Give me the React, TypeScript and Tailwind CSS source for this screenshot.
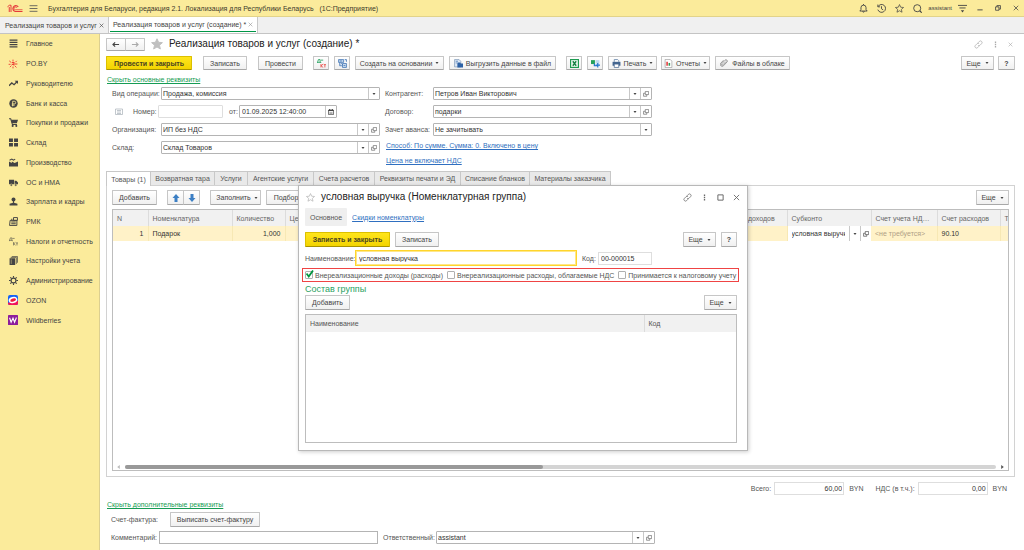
import React, { ReactNode, useState } from "react";

/* ---------- icons ---------- */

function Svg({ className = "w-[9px] h-[9px]", children }: { className?: string; children: ReactNode }) {
  return (
    <svg viewBox="0 0 16 16" className={"shrink-0 " + className} fill="none" stroke="currentColor" strokeWidth="1.6" aria-hidden="true">
      {children}
    </svg>
  );
}

const LinesIcon = () => (
  <Svg>
    <path d="M1 2h14M1 6h14M1 10h14M1 14h14" strokeWidth="2.2" />
  </Svg>
);
const BurstIcon = () => (
  <Svg className="w-[10px] h-[10px] text-[#ee4036]">
    <path d="M8 1v3M8 12v3M2 3l3 2.500M1 8.500h3M3 13l2.500-2.500M12 5l2-2M13.500 13.500L11 11" strokeWidth="1.500" />
    <path d="M6 5.500h3.500v5M11 8h4M6 8.500h4" strokeWidth="1.800" />
  </Svg>
);
const TrendIcon = () => (
  <Svg>
    <path d="M0 12l5-5 4 3 6-6" strokeWidth="2.2" />
    <path d="M10 3h6v6z" fill="currentColor" stroke="none" />
  </Svg>
);
const CoinIcon = () => (
  <Svg>
    <circle cx="8" cy="8" r="7.5" fill="currentColor" stroke="none" />
    <path d="M6.500 13V4h3a2.300 2.300 0 010 4.800H5M5 11h5" stroke="#fbeb9b" strokeWidth="1.500" />
  </Svg>
);
const CartIcon = () => (
  <Svg>
    <path d="M0 1.500h3l3 10h8" strokeWidth="1.800" />
    <path d="M3.500 3H16l-2 6.500H5.500z" fill="currentColor" stroke="none" />
    <circle cx="6.500" cy="14" r="1.800" fill="currentColor" stroke="none" />
    <circle cx="13" cy="14" r="1.800" fill="currentColor" stroke="none" />
  </Svg>
);
const BoxesIcon = () => (
  <Svg>
    <path d="M0 1h7v6H0zM9 1h7v6H9zM0 9h7v6H0zM9 9h7v6H9z" fill="currentColor" stroke="none" />
  </Svg>
);
const FactoryIcon = () => (
  <Svg>
    <path d="M0 15V6l5 3V6l5 3 6-3v9z" fill="currentColor" stroke="none" />
    <path d="M1 4l4-2 3 2 3-2" strokeWidth="1.800" />
  </Svg>
);
const TruckIcon = () => (
  <Svg>
    <path d="M0 3h9v8H0zM10 5h3l3 3v3h-6z" fill="currentColor" stroke="none" />
    <circle cx="4" cy="12.500" r="2" fill="currentColor" stroke="#fbeb9b" strokeWidth=".8" />
    <circle cx="12" cy="12.500" r="2" fill="currentColor" stroke="#fbeb9b" strokeWidth=".8" />
  </Svg>
);
const PersonIcon = () => (
  <Svg>
    <circle cx="8" cy="4.500" r="3.500" fill="currentColor" stroke="none" />
    <path d="M7 7h2v3l6 2v3H1v-3l6-2z" fill="currentColor" stroke="none" />
  </Svg>
);
const RegisterIcon = () => (
  <Svg>
    <path d="M2 6h12v9H1zM8 1h7v5H8z" strokeWidth="1.700" />
    <path d="M4 9h8M4 12h8M5 3v3" strokeWidth="1.800" />
  </Svg>
);
const DtKtIcon = () => (
  <Svg>
    <path d="M1 6l1.500-4.500H5V6M0 7.500V6h6v1.500M6 2.500h4" strokeWidth="1" />
    <path d="M8 9v6M11.500 9.500l-3 2.500 3 2.500M12.500 10.500H16M14.200 10.500V15" strokeWidth="1" />
  </Svg>
);
const BooksIcon = () => (
  <Svg>
    <path d="M1 4h10v12H1z" fill="currentColor" stroke="none" />
    <path d="M3 2.500h10V14M5 .8h10V12" strokeWidth="1.300" />
    <path d="M4 6v8" stroke="#fbeb9b" strokeWidth=".8" />
  </Svg>
);
const GearIcon = () => (
  <Svg>
    <circle cx="8" cy="8" r="4.300" strokeWidth="2" />
    <path d="M8 0v3M8 13v3M0 8h3M13 8h3M2.300 2.300l2 2M11.700 11.700l2 2M2.300 13.700l2-2M11.700 4.300l2-2" strokeWidth="2" />
  </Svg>
);
const OzonIcon = () => (
  <Svg className="w-[10px] h-[10px]">
    <rect width="16" height="16" rx="3" fill="#1663f5" stroke="none" />
    <path d="M0 12.500L16 9v4a3 3 0 01-3 3H3a3 3 0 01-3-3z" fill="#f0145a" stroke="none" />
    <ellipse cx="8" cy="8" rx="7" ry="5" fill="#fff" stroke="none" transform="rotate(-16 8 8)" />
    <ellipse cx="8.200" cy="8.200" rx="4.700" ry="2.500" fill="#f01a3c" stroke="none" transform="rotate(-16 8 8)" />
  </Svg>
);
const WbIcon = () => (
  <Svg className="w-[10px] h-[10px]">
    <rect width="16" height="16" rx="1" fill="#8c1d9c" stroke="none" />
    <path d="M2.500 4.500l2.500 7 3-6.500 2.500 6.500 3-7.500" stroke="#fff" strokeWidth="1.800" />
  </Svg>
);
const StarIcon = ({ className, filled }: { className: string; filled?: boolean }) => (
  <Svg className={className}>
    <path d="M8 1l2.100 4.700 5.100.5-3.900 3.400 1.200 5L8 12l-4.500 2.600 1.200-5L.8 6.200l5.100-.5z" fill={filled ? "currentColor" : "none"} strokeWidth="1.300" />
  </Svg>
);
const LinkIcon = ({ className }: { className: string }) => (
  <Svg className={className}>
    <path d="M7 5l2.500-2.500a2.800 2.800 0 014 4L10.500 9.500a2.500 2.500 0 01-3.500 0M9 11l-2.500 2.500a2.800 2.800 0 01-4-4L5.500 6.500a2.500 2.500 0 013.500 0" strokeWidth="1.300" />
  </Svg>
);
const CrossIcon = ({ className }: { className: string }) => (
  <Svg className={className}>
    <path d="M2 2l12 12M14 2L2 14" strokeWidth="2" />
  </Svg>
);
const DotsIcon = ({ className }: { className: string }) => (
  <Svg className={className}>
    <path d="M8 1v3.500M8 6.300v3.500M8 11.500V15" strokeWidth="3" />
  </Svg>
);
const OpenIcon = () => (
  <Svg className="w-[6px] h-[6px]">
    <path d="M6 1.500h9v8H6z" />
    <path d="M6 6H1.500v8H10v-4" />
  </Svg>
);
const Caret = () => (
  <svg viewBox="0 0 6 4" className="h-[2px] w-[4px] shrink-0" aria-hidden="true">
    <path d="M0 0h6L3 4z" fill="#444" />
  </svg>
);
const ArrowIcon = ({ className, rotate }: { className: string; rotate: number }) => (
  <Svg className={className}>
    <path d="M1 8h14M6 3L1 8l5 5" strokeWidth="2.600" transform={`rotate(${rotate} 8 8)`} />
  </Svg>
);
const BlockArrow = ({ down }: { down?: boolean }) => (
  <Svg className="h-[8px] w-[8px]">
    <path d="M8 0l7 8h-4v8H5V8H1z" fill="#3c7fc4" stroke="none" transform={down ? "rotate(180 8 8)" : undefined} />
  </Svg>
);

/* ---------- controls ---------- */

const buttonBase =
  "flex shrink-0 items-center justify-center whitespace-nowrap rounded-[1px] border border-[#c6c6c6] border-b-[#a8a8a8] bg-linear-to-b from-white to-[#f0f0f0] text-[#444]";

function Btn({ className = "", label, children }: { className?: string; label?: string; children: ReactNode }) {
  return (
    <button type="button" aria-label={label} className={`${buttonBase} ${className}`}>
      {children}
    </button>
  );
}

function PrimaryBtn({ className = "", children }: { className?: string; children: ReactNode }) {
  return (
    <button
      type="button"
      className={`flex shrink-0 items-center justify-center whitespace-nowrap rounded-[1px] border border-[#dcc000] border-b-[#a89200] bg-linear-to-b from-[#ffe51a] to-[#f3d400] font-bold text-[#4a4420] ${className}`}
    >
      {children}
    </button>
  );
}

function Combo({ id, value, open, className = "" }: { id: string; value: string; open?: boolean; className?: string }) {
  return (
    <div className={`flex h-[13px] rounded-[1px] border border-[#b4b4b4] bg-white ${className}`}>
      <div className="relative flex min-w-0 flex-1">
        <select id={id} defaultValue={value} className="min-w-0 flex-1 appearance-none bg-transparent pl-px pr-3 text-[#333] outline-none">
          <option>{value}</option>
        </select>
        <span className="pointer-events-none absolute inset-y-0 right-0 flex w-[11px] items-center justify-center border-l border-[#c8c8c8]">
          <Caret />
        </span>
      </div>
      {open && (
        <button type="button" aria-label="Открыть" className="flex w-[11px] items-center justify-center border-l border-[#c8c8c8] text-[#555]">
          <OpenIcon />
        </button>
      )}
    </div>
  );
}

function Field({ id, label, value, open, labelWidth = "w-12" }: { id: string; label: string; value: string; open?: boolean; labelWidth?: string }) {
  return (
    <div className="flex items-center">
      <label htmlFor={id} className={`${labelWidth} shrink-0 whitespace-nowrap`}>
        {label}
      </label>
      <Combo id={id} value={value} open={open} className="min-w-0 flex-1" />
    </div>
  );
}

const sections: { name: string; icon: ReactNode }[] = [
  { name: "Главное", icon: <LinesIcon /> },
  { name: "PO.BY", icon: <BurstIcon /> },
  { name: "Руководителю", icon: <TrendIcon /> },
  { name: "Банк и касса", icon: <CoinIcon /> },
  { name: "Покупки и продажи", icon: <CartIcon /> },
  { name: "Склад", icon: <BoxesIcon /> },
  { name: "Производство", icon: <FactoryIcon /> },
  { name: "ОС и НМА", icon: <TruckIcon /> },
  { name: "Зарплата и кадры", icon: <PersonIcon /> },
  { name: "РМК", icon: <RegisterIcon /> },
  { name: "Налоги и отчетность", icon: <DtKtIcon /> },
  { name: "Настройки учета", icon: <BooksIcon /> },
  { name: "Администрирование", icon: <GearIcon /> },
  { name: "OZON", icon: <OzonIcon /> },
  { name: "Wildberries", icon: <WbIcon /> },
];

const docTabs: { name: string; width: string }[] = [
  { name: "Товары (1)", width: "w-[45px]" },
  { name: "Возвратная тара", width: "w-[65px]" },
  { name: "Услуги", width: "w-[34px]" },
  { name: "Агентские услуги", width: "w-[67px]" },
  { name: "Счета расчетов", width: "w-[62px]" },
  { name: "Реквизиты печати и ЭД", width: "w-[87px]" },
  { name: "Списание бланков", width: "w-[70px]" },
  { name: "Материалы заказчика", width: "w-[82px]" },
];

function TitleBar() {
  return (
    <header className="flex h-[17px] shrink-0 items-center border-b border-[#e2d38a] bg-[#fbeb9b] pl-[7px] pr-[5px]">
      <svg viewBox="0 0 32 18" className="h-[9px] w-4" fill="none" stroke="#e5383b" strokeWidth="2.400" aria-label="1С">
        <path d="M1 5.500l4-3h3V16M4.500 6v10" strokeWidth="2" />
        <path d="M22.500 6A5.800 5.800 0 1017 15h14" />
        <path d="M19.500 7.500A2.800 2.800 0 1017 11.500h14" strokeWidth="1.600" />
      </svg>
      <button type="button" aria-label="Меню" className="ml-[6px] text-[#555]">
        <Svg className="h-[9px] w-[9px]">
          <path d="M1 3h14M1 8h14M1 13h14" strokeWidth="1.500" />
        </Svg>
      </button>
      <div className="ml-[10px] flex-1 whitespace-pre text-[#3c3a2c]">
        Бухгалтерия для Беларуси, редакция 2.1. Локализация для Республики Беларусь{"   "}(1С:Предприятие)
      </div>
      <div className="flex items-center text-[#444]">
        <button type="button" aria-label="Уведомления" className="mr-[9px]">
          <Svg>
            <path d="M1.500 12.500h13L12.500 10V6.500a4.500 4.500 0 00-9 0V10zM6.500 13a1.500 1.500 0 003 0M8 2V0" />
          </Svg>
        </button>
        <button type="button" aria-label="История" className="mr-[9px]">
          <Svg>
            <path d="M2 4.500A7 7 0 111.500 10M1.500 1v4h4M8 4v4.500l3 2" />
          </Svg>
        </button>
        <button type="button" aria-label="Избранное" className="mr-[9px]">
          <StarIcon className="h-[9px] w-[9px]" />
        </button>
        <button type="button" aria-label="Поиск" className="mr-[6px]">
          <Svg>
            <circle cx="7.500" cy="7.500" r="6.300" />
            <path d="M12 12l3.500 3.500" strokeWidth="2" />
          </Svg>
        </button>
        <span className="text-[6px]">assistant</span>
        <button type="button" aria-label="Настройки" className="ml-[6px] mr-[10px]">
          <Svg>
            <path d="M0 2.500h16M2.500 7h11" />
            <path d="M5 11h6l-3 4z" fill="currentColor" stroke="none" />
          </Svg>
        </button>
        <button type="button" aria-label="Свернуть" className="mr-[12px]">
          <Svg className="h-[6px] w-[6px]">
            <path d="M1 13h14" strokeWidth="2.500" />
          </Svg>
        </button>
        <button type="button" aria-label="Развернуть" className="mr-[12px]">
          <Svg className="h-[6px] w-[6px]">
            <path d="M1.500 5h9v9h-9zM5 5V1.500h9.500V11h-4" strokeWidth="2.200" />
          </Svg>
        </button>
        <button type="button" aria-label="Закрыть">
          <CrossIcon className="h-[6px] w-[6px]" />
        </button>
      </div>
    </header>
  );
}

function WindowTabs() {
  return (
    <nav className="flex h-[17px] shrink-0 border-b border-[#c4c4c4] bg-[#f0f0f0] text-[#444]">
      <div className="flex w-[109px] items-center justify-between border-r border-[#c8c8c8] pl-[5px] pr-[4px]">
        <a href="#list">Реализация товаров и услуг</a>
        <button type="button" aria-label="Закрыть вкладку">
          <CrossIcon className="h-[5px] w-[5px]" />
        </button>
      </div>
      <div className="flex w-[149px] border-r border-[#c8c8c8] bg-white px-px">
        <div className="mb-px flex flex-1 items-center justify-between border-b border-[#009646] pl-[3px] pr-[3px] pt-px">
          <a href="#new">Реализация товаров и услуг (создание) *</a>
          <button type="button" aria-label="Закрыть вкладку" className="text-[#999]">
            <CrossIcon className="h-[5px] w-[5px]" />
          </button>
        </div>
      </div>
    </nav>
  );
}

function Toolbar() {
  return (
    <div className="mt-[2px] flex h-[14px] items-stretch">
      <PrimaryBtn className="w-[86px]">Провести и закрыть</PrimaryBtn>
      <Btn className="ml-[11px] w-[44px]">Записать</Btn>
      <Btn className="ml-[11px] w-[45px]">Провести</Btn>
      <Btn className="ml-[10px] w-[16px]" label="Дт Кт">
        <Svg>
          <path d="M1 6l1.500-5h3v5M0 7V6h7v1M7 2h4" stroke="#169c54" strokeWidth="1.400" />
          <path d="M7 9v6M11 9l-4 3 4 3M12 10h4M14 10v5" stroke="#e8443c" strokeWidth="1.400" />
        </Svg>
      </Btn>
      <Btn className="ml-[5px] w-[16px]" label="Структура подчиненности">
        <Svg className="h-[9px] w-[9px] text-[#4377b5]">
          <path d="M1 1h9v5H1zM8 8h7v7H8zM3 6v6h4M12 1h3v4" fill="#c9dbef" strokeWidth="1.400" />
          <path d="M3 3.500h4M10 11.500h3M5 7l4 4" strokeWidth="1.400" />
        </Svg>
      </Btn>
      <Btn className="ml-[5px] w-[89px] gap-[3px]">
        Создать на основании <Caret />
      </Btn>
      <Btn className="ml-[5px] w-[107px] gap-[3px]">
        <Svg className="h-[9px] w-[9px]">
          <path d="M1 1h8l3 3v10H1z" fill="#dfeaf6" stroke="#7893b4" strokeWidth="1.200" />
          <path d="M6 6h5l1 2h4v7H6z" fill="#2e62a6" stroke="none" />
          <path d="M3 4h4M3 7h2" stroke="#2e62a6" strokeWidth="1.200" />
        </Svg>
        Выгрузить данные в файл
      </Btn>
      <Btn className="ml-[10px] w-[16px]" label="Excel">
        <Svg>
          <rect x="1" y="1" width="14" height="14" fill="#e8f5ec" stroke="#1d9a50" strokeWidth="2" />
          <path d="M5 4l6 8M11 4l-6 8" stroke="#168043" strokeWidth="2.400" />
        </Svg>
      </Btn>
      <Btn className="ml-[5px] w-[16px]" label="Обмен">
        <Svg>
          <path d="M0 2h7v7H0z" fill="#25a25a" stroke="none" />
          <path d="M8 2h7v6H8z" fill="#bcd9ef" stroke="none" />
          <path d="M6 8v4h5M12 7v8M8 11h8" stroke="#2577cf" strokeWidth="2.200" />
        </Svg>
      </Btn>
      <Btn className="ml-[5px] w-[49px] gap-[3px]">
        <Svg>
          <path d="M4 5V1h6l2 2v2" fill="#fff" stroke="#55779f" strokeWidth="1.300" />
          <path d="M1 5h14v7H1z" fill="#44658f" stroke="none" />
          <path d="M4 9h8v6H4z" fill="#fff" stroke="#44658f" strokeWidth="1.300" />
        </Svg>
        Печать <Caret />
      </Btn>
      <Btn className="ml-[4px] w-[49px] gap-[3px]">
        <Svg>
          <path d="M2 .8h9l3 3v11.400H2z" fill="#fff" stroke="#999" strokeWidth="1.200" />
          <path d="M5.500 5v7" stroke="#e43d3d" strokeWidth="2.800" />
          <path d="M9.500 7v5" stroke="#2f9a56" strokeWidth="2.800" />
        </Svg>
        Отчеты <Caret />
      </Btn>
      <Btn className="ml-[5px] w-[75px] gap-1">
        <Svg className="h-[8px] w-[8px] text-[#777]">
          <path d="M12 5l-6 6.500a1.500 1.500 0 01-2.500-2L10 2.500a2.600 2.600 0 014 3.500l-7 7.500A3.800 3.800 0 011 9l6-6.500" strokeWidth="1.500" />
        </Svg>
        Файлы в облаке
      </Btn>
      <div className="flex-1" />
      <Btn className="w-[33px] gap-1">
        Еще <Caret />
      </Btn>
      <Btn className="ml-1 w-[17px] font-bold">?</Btn>
    </div>
  );
}

function Requisites() {
  return (
    <div className="mt-[2px] flex gap-[5px] pl-[6px]">
      <div className="flex w-[268px] flex-col gap-[5px]">
        <Field id="op" label="Вид операции:" value="Продажа, комиссия" labelWidth="w-[49px]" />
        <div className="flex h-[13px] items-center">
          <Svg className="ml-[3px] h-[8px] w-[8px] text-[#a8b0b8]">
            <path d="M1 2h14v11H1zM4 5h8M4 8h8M4 11h8" strokeWidth="1.400" />
          </Svg>
          <label htmlFor="num" className="ml-[10px] w-[25px]">
            Номер:
          </label>
          <input id="num" className="h-[13px] w-[65px] rounded-[1px] border border-[#dedede] px-[2px] outline-none" />
          <label htmlFor="date" className="ml-[6px] w-[10px]">
            от:
          </label>
          <div className="flex h-[13px] w-[98px] rounded-[1px] border border-[#b4b4b4]">
            <input id="date" defaultValue="01.09.2025 12:40:00" className="min-w-0 flex-1 px-[2px] text-[#333] outline-none" />
            <button type="button" aria-label="Календарь" className="flex w-[11px] items-center justify-center border-l border-[#c8c8c8] text-[#444]">
              <Svg className="h-[6px] w-[6px]">
                <path d="M1.500 3h13v12h-13z" strokeWidth="2" />
                <path d="M1 4h14M4.500 0v4M11.500 0v4" strokeWidth="3" />
                <path d="M4 9h8M4 12h8" strokeWidth="1.200" />
              </Svg>
            </button>
          </div>
        </div>
        <Field id="org" label="Организация:" value="ИП без НДС" open labelWidth="w-[49px]" />
        <Field id="store" label="Склад:" value="Склад Товаров" open labelWidth="w-[49px]" />
      </div>
      <div className="flex w-[267px] flex-col gap-[5px]">
        <Field id="partner" label="Контрагент:" value="Петров Иван Викторович" open />
        <Field id="contract" label="Договор:" value="подарки" open />
        <Field id="advance" label="Зачет аванса:" value="Не зачитывать" />
        <a href="#sum" className="h-[10px] self-start whitespace-nowrap pl-px text-[#2f6fc0] underline">
          Способ: По сумме. Сумма: 0. Включено в цену
        </a>
        <a href="#vat" className="h-[10px] self-start whitespace-nowrap pl-px text-[#2f6fc0] underline">
          Цена не включает НДС
        </a>
      </div>
    </div>
  );
}

function GoodsPanel() {
  const head = "overflow-hidden whitespace-nowrap border-r border-[#dcdcdc] px-1 text-left font-normal";
  const cell = "overflow-hidden whitespace-nowrap border-r border-[#f7e8b4] px-1";
  return (
    <section className="flex min-h-[200px] flex-1 flex-col border border-[#d2d2d2] px-[5px] pb-[5px] pt-1">
      <div className="flex h-[15px]">
        <Btn className="w-[45px]">Добавить</Btn>
        <Btn className="ml-[10px] w-[17px]" label="Вверх">
          <BlockArrow />
        </Btn>
        <Btn className="-ml-px w-[17px]" label="Вниз">
          <BlockArrow down />
        </Btn>
        <Btn className="ml-[10px] w-[51px] gap-[3px] pl-[3px]">
          Заполнить <Caret />
        </Btn>
        <Btn className="ml-[5px] w-[40px]">Подбор</Btn>
        <div className="flex-1" />
        <Btn className="w-[33px] gap-1">
          Еще <Caret />
        </Btn>
      </div>
      <div className="mt-1 flex flex-1 flex-col overflow-hidden border border-[#bdbdbd]">
        <table className="w-full table-fixed border-collapse">
          <thead>
            <tr className="h-4 bg-[#f1f1f1] text-[#666]">
              <th className={`${head} w-[35px]`}>N</th>
              <th className={`${head} w-[84px]`}>Номенклатура</th>
              <th className={`${head} w-[53px]`}>Количество</th>
              <th className={head}>Цена</th>
              <th className={`${head} w-[61px]`}>Счет доходов</th>
              <th className={`${head} w-[84px]`}>Субконто</th>
              <th className={`${head} w-[66px]`}>Счет учета НД…</th>
              <th className={`${head} w-[63px]`}>Счет расходов</th>
              <th className="w-[8px] overflow-hidden pl-[4px] text-left font-normal">Т</th>
            </tr>
          </thead>
          <tbody>
            <tr className="h-[15px] bg-[#fff2c8] text-[#333]">
              <td className={`${cell} text-right`}>1</td>
              <td className={cell}>Подарок</td>
              <td className={`${cell} text-right`}>1,000</td>
              <td className={cell} />
              <td className={cell} />
              <td className="bg-white">
                <div className="flex h-[15px]">
                  <input aria-label="Субконто" defaultValue="условная выручка" className="ml-1 mr-1 min-w-0 flex-1 outline-none" />
                  <button type="button" aria-label="Выбрать" className="flex w-[11px] items-center justify-center border-l border-[#c8c8c8]">
                    <Caret />
                  </button>
                  <button type="button" aria-label="Открыть" className="flex w-[11px] items-center justify-center border-l border-[#c8c8c8]">
                    <OpenIcon />
                  </button>
                </div>
              </td>
              <td className={`${cell} text-[#b09f86]`}>&lt;не требуется&gt;</td>
              <td className={cell}>90.10</td>
              <td />
            </tr>
          </tbody>
        </table>
        <div className="flex-1" />
        <div className="mb-px flex items-center gap-[5px] px-1">
          <svg viewBox="0 0 4 6" className="h-[4px] w-[3px]" aria-hidden="true">
            <path d="M4 0v6L0 3z" fill="#bbb" />
          </svg>
          <div className="h-1 flex-1 rounded-full bg-[#d4d4d4]">
            <div className="h-1 w-[48%] rounded-full bg-[#999]" />
          </div>
          <svg viewBox="0 0 4 6" className="h-[4px] w-[3px]" aria-hidden="true">
            <path d="M0 0v6l4-3z" fill="#555" />
          </svg>
        </div>
      </div>
    </section>
  );
}

function Check({ id, label, initial }: { id: string; label: string; initial?: boolean }) {
  const [on, setOn] = useState(!!initial);
  return (
    <div className="flex items-center gap-[2px]">
      <span className="relative flex">
        <input
          id={id}
          type="checkbox"
          checked={on}
          onChange={(e) => setOn(e.target.checked)}
          className="h-2 w-2 appearance-none rounded-[1px] border border-[#b0b0b0] bg-white"
        />
        {on && (
          <svg viewBox="0 0 16 16" className="pointer-events-none absolute bottom-px left-px h-2 w-2" fill="none" stroke="#00963f" strokeWidth="3.600" aria-hidden="true">
            <path d="M1 7l4.500 6L14 1" />
          </svg>
        )}
      </span>
      <label htmlFor={id} className="whitespace-nowrap">
        {label}
      </label>
    </div>
  );
}

function GroupDialog() {
  return (
    <div
      role="dialog"
      aria-label="условная выручка (Номенклатурная группа)"
      className="absolute left-[198px] top-[151px] flex h-[266px] w-[450px] flex-col border border-[#b8b8b8] bg-white px-[6px] pb-[7px] text-[#555] shadow-[1px_1px_4px_rgba(0,0,0,0.2)]"
    >
      <div className="flex h-[22px] items-center">
        <StarIcon className="ml-px h-[9px] w-[9px] text-[#b5b5b5]" />
        <h2 className="ml-[6px] flex-1 text-[10px] leading-3 text-[#222]">условная выручка (Номенклатурная группа)</h2>
        <div className="flex items-center gap-[9px] pr-px text-[#666]">
          <button type="button" aria-label="Ссылка">
            <LinkIcon className="h-[9px] w-[9px]" />
          </button>
          <button type="button" aria-label="Еще">
            <DotsIcon className="h-[7px] w-[7px]" />
          </button>
          <button type="button" aria-label="Развернуть">
            <Svg className="h-[7px] w-[7px]">
              <path d="M2 2h12v12H2z" strokeWidth="2.200" />
            </Svg>
          </button>
          <button type="button" aria-label="Закрыть">
            <CrossIcon className="h-[7px] w-[7px]" />
          </button>
        </div>
      </div>
      <div className="flex h-[18px] items-center">
        <a href="#main" className="flex h-[18px] items-center rounded-[1px] bg-[#efefef] px-[5px]">
          Основное
        </a>
        <a href="#discounts" className="ml-[5px] text-[#2f6fc0] underline">
          Скидки номенклатуры
        </a>
      </div>
      <div className="mt-[6px] flex h-[15px]">
        <PrimaryBtn className="w-[85px]">Записать и закрыть</PrimaryBtn>
        <Btn className="ml-[5px] w-[44px]">Записать</Btn>
        <div className="flex-1" />
        <Btn className="w-[33px] gap-1">
          Еще <Caret />
        </Btn>
        <Btn className="ml-[5px] mr-[4px] w-[16px] font-bold">?</Btn>
      </div>
      <div className="mt-[3px] flex h-4 items-center">
        <label htmlFor="name" className="w-[50px]">
          Наименование:
        </label>
        <input
          id="name"
          autoFocus
          defaultValue="условная выручка"
          className="h-4 w-[222px] border border-[#ffd52b] px-[3px] text-[#333] shadow-[inset_0_0_0_1px_#ffe78a] outline-none"
        />
        <label htmlFor="code" className="ml-[5px] w-4">
          Код:
        </label>
        <input id="code" defaultValue="00-000015" className="h-[13px] w-[54px] border border-[#dedede] px-[2px] text-[#333] outline-none" />
      </div>
      <div className="-ml-[3px] mr-[2px] mt-[2px] flex h-[14px] shrink-0 items-center gap-1 border border-[#ef4444] pl-[2px]">
        <Check id="c1" label="Внереализационные доходы (расходы)" initial />
        <Check id="c2" label="Внереализационные расходы, облагаемые НДС" />
        <Check id="c3" label="Принимается к налоговому учету" />
      </div>
      <h3 className="mt-px text-[9px] leading-3 text-[#2b9f62]">Состав группы</h3>
      <div className="flex h-[15px] shrink-0 justify-between pr-1">
        <Btn className="w-[45px]">Добавить</Btn>
        <Btn className="w-[33px] gap-1">
          Еще <Caret />
        </Btn>
      </div>
      <div className="mr-1 mt-1 flex-1 border border-[#bdbdbd]">
        <table className="w-full table-fixed border-collapse">
          <thead>
            <tr className="h-[17px] bg-[#f1f1f1]">
              <th className="border-r border-[#dcdcdc] px-1 text-left font-normal">Наименование</th>
              <th className="w-[92px] px-1 text-left font-normal">Код</th>
            </tr>
          </thead>
        </table>
      </div>
    </div>
  );
}

export default function App() {
  return (
    <div className="flex min-h-screen flex-col bg-white font-['Liberation_Sans',Arial,sans-serif] text-[7px] leading-[9px] text-[#555]">
      <TitleBar />
      <WindowTabs />
      <div className="flex flex-1">
        <aside className="w-[100px] shrink-0 border-r border-[#dccf90] bg-[#fbeb9b]">
          <nav className="flex h-[296px] flex-col text-[#444]">
            {sections.map((s) => (
              <a key={s.name} href={"#" + s.name} className="flex flex-1 items-center whitespace-nowrap pl-2">
                <span className="flex w-[10px] justify-center">{s.icon}</span>
                <span className="ml-2">{s.name}</span>
              </a>
            ))}
          </nav>
        </aside>
        <main className="relative flex min-w-0 flex-1 flex-col pl-[6px] pr-[9px]">
          <div className="flex h-5 items-center">
            <Btn className="h-[13px] w-[20px]" label="Назад">
              <ArrowIcon className="h-[7px] w-[8px] text-[#444]" rotate={0} />
            </Btn>
            <Btn className="-ml-px h-[13px] w-[20px]" label="Вперед">
              <ArrowIcon className="h-[7px] w-[8px] text-[#aaa]" rotate={180} />
            </Btn>
            <StarIcon className="ml-[6px] h-[12px] w-[12px] text-[#c0c0c0]" filled />
            <h1 className="ml-[6px] flex-1 text-[10px] leading-3 text-[#222]">Реализация товаров и услуг (создание) *</h1>
            <div className="flex items-center gap-[9px] pr-[2px] text-[#aaa]">
              <button type="button" aria-label="Ссылка">
                <LinkIcon className="h-[9px] w-[9px]" />
              </button>
              <button type="button" aria-label="Меню формы">
                <DotsIcon className="h-[7px] w-[7px]" />
              </button>
              <button type="button" aria-label="Закрыть форму">
                <CrossIcon className="h-[5px] w-[5px]" />
              </button>
            </div>
          </div>
          <Toolbar />
          <a href="#hide-main" className="mt-[5px] h-[10px] self-start pl-px text-[#169c54] underline">
            Скрыть основные реквизиты
          </a>
          <Requisites />
          <div role="tablist" className="mt-[5px] flex h-[14px]">
            {docTabs.map((t, i) => (
              <button
                key={t.name}
                type="button"
                role="tab"
                aria-selected={i === 0}
                className={
                  i === 0
                    ? `relative -mb-px flex items-center justify-center whitespace-nowrap border border-b-0 border-[#c8c8c8] bg-white ${t.width}`
                    : `-ml-px flex items-center justify-center whitespace-nowrap border border-b-0 border-[#c8c8c8] bg-[#e9e9e9] ${t.width}`
                }
              >
                {t.name}
              </button>
            ))}
          </div>
          <GoodsPanel />
          <div className="mt-[5px] flex h-[13px] items-center justify-end pr-2">
            <label htmlFor="total">Всего:</label>
            <input id="total" defaultValue="60,00" className="ml-[3px] h-[13px] w-[70px] border border-[#dedede] px-px text-right text-[#333] outline-none" />
            <span className="ml-[5px]">BYN</span>
            <label htmlFor="vat" className="ml-3">
              НДС (в т.ч.):
            </label>
            <input id="vat" defaultValue="0,00" className="ml-[3px] h-[13px] w-[70px] border border-[#dedede] px-px text-right text-[#333] outline-none" />
            <span className="ml-[5px]">BYN</span>
          </div>
          <a href="#hide-extra" className="mt-[5px] h-[10px] self-start pl-px text-[#169c54] underline">
            Скрыть дополнительные реквизиты
          </a>
          <div className="mt-[2px] flex h-[15px] items-center pl-[5px]">
            <span className="w-[59px]">Счет-фактура:</span>
            <Btn className="h-[15px] w-[90px]">Выписать счет-фактуру</Btn>
          </div>
          <div className="mb-[6px] mt-[4px] flex h-[13px] items-center pl-[5px]">
            <label htmlFor="comment" className="w-12">
              Комментарий:
            </label>
            <input id="comment" className="h-[13px] w-[219px] border border-[#b4b4b4] px-[2px] outline-none" />
            <label htmlFor="resp" className="ml-[5px] w-[53px]">
              Ответственный:
            </label>
            <Combo id="resp" value="assistant" open className="w-[219px]" />
          </div>
          <GroupDialog />
        </main>
      </div>
    </div>
  );
}
